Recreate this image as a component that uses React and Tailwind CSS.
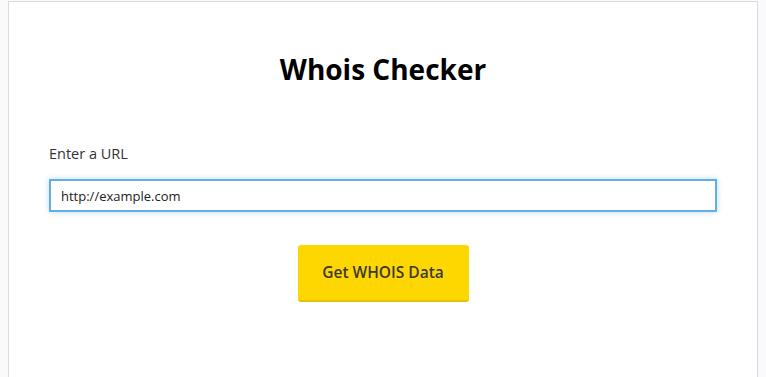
import React, { useState } from "react";

const App = () => {
  const [url, setUrl] = useState("http://example.com");

  return (
    <div className="min-h-[377px] bg-[#fafafc] px-2 pt-px" style={{ fontFamily: '"Open Sans", "Noto Sans", sans-serif' }}>
      <div className="min-h-[376px] border border-b-0 border-[#dcdcdc] bg-white px-10 pt-[43px]">
        <h1 className="text-center text-[28px] font-bold leading-[48px] text-black">Whois Checker</h1>
        <label className="mt-[51px] block text-[14.5px] leading-5 text-[#333]">Enter a URL</label>
        <input
          type="text"
          value={url}
          onChange={(e) => setUrl(e.target.value)}
          className="mt-[15px] block h-[33px] w-full border-2 border-[#64aee8] px-[10px] text-[13px] text-[#222] shadow-[0_0_6px_rgba(100,174,232,0.45)] outline-none"
        />
        <div className="mt-[33px] flex justify-center">
          <button className="h-[57px] w-[171px] rounded-[3px] border-b-2 border-[#e6c200] bg-[#ffd700] text-[15.5px] font-semibold text-[#3a3a3a]">
            Get WHOIS Data
          </button>
        </div>
      </div>
    </div>
  );
};

export default App;
